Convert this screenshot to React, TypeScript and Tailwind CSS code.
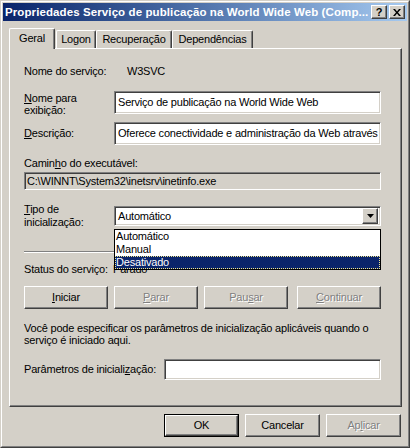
import React from "react";

const raised =
  "border border-t-white border-l-white border-r-[#404040] border-b-[#404040] shadow-[inset_-1px_-1px_#808080]";
const sunken =
  "border border-t-[#808080] border-l-[#808080] border-r-white border-b-white shadow-[inset_1px_1px_#404040,inset_-1px_-1px_#d4d0c8]";

const Btn = ({
  label,
  width = "w-[84px]",
  disabled = false,
  isDefault = false,
  className = "",
}: {
  label: React.ReactNode;
  width?: string;
  disabled?: boolean;
  isDefault?: boolean;
  className?: string;
}) => {
  const face = (
    <div
      className={`h-full w-full bg-[#d4d0c8] flex items-center justify-center ${raised} ${
        disabled ? "text-[#808080] [text-shadow:1px_1px_0_#ffffff]" : "text-black"
      }`}
    >
      {label}
    </div>
  );
  if (isDefault) {
    return (
      <div className={`${width} h-[23px] border border-black ${className}`}>{face}</div>
    );
  }
  return <div className={`${width} h-[23px] ${className}`}>{face}</div>;
};

const Field = ({ text, className = "" }: { text?: string; className?: string }) => (
  <div
    className={`bg-white ${sunken} flex items-center pl-[3px] overflow-hidden whitespace-nowrap ${className}`}
  >
    {text}
  </div>
);

const Tab = ({ label, w, selected = false }: { label: string; w: string; selected?: boolean }) => (
  <div
    className={`${w} ${
      selected ? "h-[21px] -mb-px z-10 pt-[3px]" : "h-[18px] pt-[2px]"
    } relative bg-[#d4d0c8] border-t border-l border-t-white border-l-white border-r border-r-[#404040] shadow-[inset_-1px_0_#808080] rounded-t-[2px] flex justify-center`}
  >
    {label}
  </div>
);

export default function App() {
  return (
    <div className="w-[410px] h-[448px] bg-[#d4d0c8] border border-t-[#d4d0c8] border-l-[#d4d0c8] border-r-[#404040] border-b-[#404040] font-['Liberation_Sans',Arial,sans-serif] text-[11px] tracking-[-0.2px] text-black leading-[13px]">
      <div className="h-full w-full border border-t-white border-l-white border-r-[#808080] border-b-[#808080] p-px flex flex-col">
        {/* title bar */}
        <div className="h-[18px] shrink-0 bg-gradient-to-r from-[#0a246a] to-[#a6caf0] flex items-center pl-[2px] pr-[2px]">
          <div className="flex-1 text-white font-bold text-[11.5px] tracking-[0.1px] whitespace-nowrap overflow-hidden">
            Propriedades Serviço de publicação na World Wide Web (Comp...
          </div>
          <div className={`w-[16px] h-[14px] bg-[#d4d0c8] ${raised} flex items-center justify-center font-bold text-[11px] leading-none`}>
            ?
          </div>
          <div className={`ml-[2px] w-[16px] h-[14px] bg-[#d4d0c8] ${raised} flex items-center justify-center`}>
            <svg width="8" height="7" viewBox="0 0 8 7">
              <path d="M0 0h2l2 2.5L6 0h2L5 3.5 8 7H6L4 4.5 2 7H0l3-3.5z" fill="#000" />
            </svg>
          </div>
        </div>

        {/* tabs */}
        <div className="mt-[7px] ml-[6px] flex items-end h-[20px]">
          <Tab label="Geral" w="w-[46px]" selected />
          <div className="w-px" />
          <Tab label="Logon" w="w-[40px]" />
          <Tab label="Recuperação" w="w-[76px]" />
          <Tab label="Dependências" w="w-[81px]" />
        </div>

        {/* panel */}
        <div className="ml-[6px] w-[393px] h-[359px] shrink-0 border border-t-white border-l-white border-r-[#404040] border-b-[#404040] shadow-[inset_-1px_-1px_#808080] pl-[14px] flex flex-col">
          <div className="mt-[16px] h-[13px] flex">
            <div className="w-[103px]">Nome do serviço:</div>
            <div>W3SVC</div>
          </div>

          <div className="mt-[13px] flex">
            <div className="w-[90px] leading-[12px] pt-[1px]">
              <u>N</u>ome para
              <br />
              exibição:
            </div>
            <Field className="w-[267px] h-[23px]" text="Serviço de publicação na World Wide Web" />
          </div>

          <div className="mt-[6px] flex items-center">
            <div className="w-[90px]">
              <u>D</u>escrição:
            </div>
            <Field
              className="w-[267px] h-[23px]"
              text="Oferece conectividade e administração da Web através do Internet Information Services"
            />
          </div>

          <div className="mt-[12px] h-[13px]">
            Camin<u>h</u>o do executável:
          </div>

          <div className={`mt-[2px] w-[357px] h-[18px] ${sunken} bg-[#d4d0c8] flex items-center pl-[2px]`}>
            C:\WINNT\System32\inetsrv\inetinfo.exe
          </div>

          <div className="mt-[13px] flex h-[26px]">
            <div className="w-[90px]">
              <u>T</u>ipo de
              <br />
              inicialização:
            </div>
            <div className="relative mt-[3px] z-20">
              <div className={`w-[267px] h-[20px] bg-white ${sunken} flex items-center pl-[3px] pr-[2px]`}>
                <div className="flex-1">Automático</div>
                <div className={`w-[16px] h-[16px] bg-[#d4d0c8] ${raised} flex items-center justify-center`}>
                  <svg width="7" height="4" viewBox="0 0 7 4">
                    <path d="M0 0h7L3.5 4z" fill="#000" />
                  </svg>
                </div>
              </div>
              <div className="absolute left-0 top-full w-[267px] bg-white border border-black flex flex-col">
                <div className="h-[13px] pl-[1px]">Automático</div>
                <div className="h-[13px] pl-[1px]">Manual</div>
                <div className="h-[13px] pl-[1px] bg-[#0a246a] text-white outline outline-1 outline-dotted outline-[#f0e68c] -outline-offset-1">
                  Desativado
                </div>
              </div>
            </div>
          </div>

          <div className="mt-[22px] w-[357px] h-[2px] border-t border-t-[#808080] border-b border-b-white" />

          <div className="mt-[10px] h-[13px] flex">
            <div className="w-[89px]">Status do serviço:</div>
            <div>Parado</div>
          </div>

          <div className="mt-[10px] flex">
            <Btn label={<span><u>I</u>niciar</span>} />
            <Btn label={<span><u>P</u>arar</span>} disabled className="ml-[6px]" />
            <Btn label={<span>Pau<u>s</u>ar</span>} disabled className="ml-[6px]" />
            <Btn label={<span><u>C</u>ontinuar</span>} disabled className="ml-[9px]" />
          </div>

          <div className="mt-[13px] leading-[12px] whitespace-nowrap">
            Você pode especificar os parâmetros de inicialização aplicáveis quando o
            <br />
            serviço é iniciado aqui.
          </div>

          <div className="mt-[13px] flex items-center">
            <div className="w-[140px]">
              Parâmetros de iniciali<u>z</u>ação:
            </div>
            <Field className="w-[217px] h-[21px]" />
          </div>
        </div>

        {/* bottom buttons */}
        <div className="mt-[7px] ml-[6px] w-[393px] flex justify-end pr-px">
          <Btn label="OK" width="w-[75px]" isDefault />
          <Btn label="Cancelar" width="w-[75px]" className="ml-[6px]" />
          <Btn label={<span>Ap<u>l</u>icar</span>} width="w-[75px]" disabled className="ml-[6px]" />
        </div>
      </div>
    </div>
  );
}
